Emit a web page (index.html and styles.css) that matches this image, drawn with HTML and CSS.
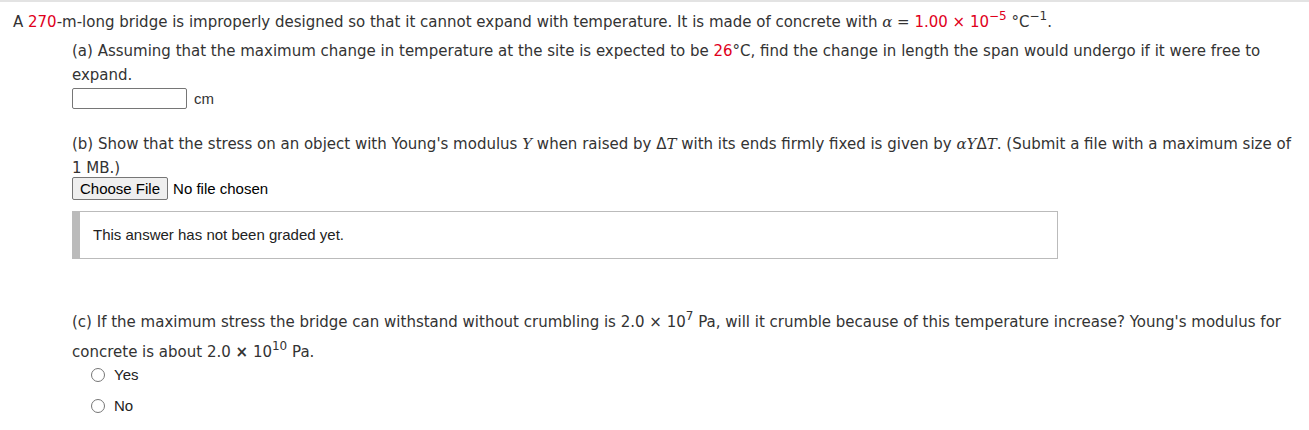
FILE: index.html
```html
<!DOCTYPE html>
<html>
<head>
<meta charset="utf-8">
<link rel="stylesheet" href="styles.css">
</head>
<body>
<div class="page">
  <p class="stem">A <span class="red">270</span>-m-long bridge is improperly designed so that it cannot expand with temperature. It is made of concrete with <i class="mv">α</i> = <span class="red mnum">1.00 × 10<sup>−5</sup></span> <span class="mnum">°C<sup>−1</sup></span>.</p>
  <div class="part parta">
    <p class="q">(a) Assuming that the maximum change in temperature at the site is expected to be <span class="red">26</span>°C, find the change in length the span would undergo if it were free to expand.</p>
    <div class="ansrow"><span class="numbox"></span><span class="unit">cm</span></div>
  </div>
  <div class="part partb">
    <p class="q">(b) Show that the stress on an object with Young's modulus <i class="mv">Y</i> when raised by Δ<i class="mv">T</i> with its ends firmly fixed is given by <i class="mv">α</i><i class="mv">Y</i>Δ<i class="mv">T</i>. (Submit a file with a maximum size of 1 MB.)</p>
    <div class="filerow"><span class="filebtn">Choose File</span><span class="nofile">No file chosen</span></div>
    <div class="graded">This answer has not been graded yet.</div>
  </div>
  <div class="part partc">
    <p class="q qc">(c) If the maximum stress the bridge can withstand without crumbling is 2.0 × 10<sup>7</sup> Pa, will it crumble because of this temperature increase? Young's modulus for concrete is about 2.0 <b class="x">×</b> 10<sup>10</sup> Pa.</p>
    <ul class="opts">
      <li><span class="radio"></span><span class="lbl">Yes</span></li>
      <li><span class="radio"></span><span class="lbl">No</span></li>
    </ul>
  </div>
</div>
</body>
</html>
```
FILE: styles.css
```css
html, body { margin: 0; padding: 0; background: #fff; }
body { font-family: "DejaVu Sans", Verdana, sans-serif; font-size: 15px; color: #333; }
.page { border-top: 2px solid #e3e3e3; padding: 8px 13px 0 13px; }
p { margin: 0; }
.stem { line-height: 24px; }
.red { color: #e0001b; }
.mv { font-family: "DejaVu Serif", serif; font-style: italic; }
.mnum { font-family: "DejaVu Sans", sans-serif; }
sup { font-size: 12px; line-height: 0; vertical-align: 7px; }
.part { padding-left: 59px; }
.q { line-height: 24px; }
.parta { margin-top: 5px; }
.ansrow { display: flex; align-items: center; height: 22px; }
.numbox { box-sizing: border-box; width: 115px; height: 21px; border: 1px solid #767676; border-radius: 2px; display: inline-block; }
.unit { font-family: "Liberation Sans", Arial, sans-serif; font-size: 15px; margin-left: 7px; color: #333; }
.partb { margin-top: 23px; }
.filerow { display: flex; align-items: center; height: 23px; margin-top: -3px; }
.filebtn { font-family: "Liberation Sans", Arial, sans-serif; font-size: 15px; color: #000; background: #efefef; border: 1px solid #767676; border-radius: 2px; height: 21px; line-height: 21px; padding: 0 7px; }
.nofile { font-family: "Liberation Sans", Arial, sans-serif; font-size: 15px; color: #000; margin-left: 5px; }
.graded { margin-top: 11px; width: 964px; height: 46px; border: 1px solid #bbb; border-left: 8px solid #bbb; padding-left: 13px; font-family: "Liberation Sans", Arial, sans-serif; font-size: 15px; line-height: 46px; color: #222; }
.partc { margin-top: 48px; }
.qc { line-height: 30px; }
.x { font-weight: bold; }
.opts { list-style: none; margin: -8px 0 0 0; padding: 0 0 0 19px; }
.opts li { display: flex; align-items: center; height: 31px; }
.radio { width: 12px; height: 12px; border: 1px solid #767676; border-radius: 50%; display: inline-block; }
.lbl { font-family: "Liberation Sans", Arial, sans-serif; font-size: 15px; margin-left: 9px; color: #222; }
```
